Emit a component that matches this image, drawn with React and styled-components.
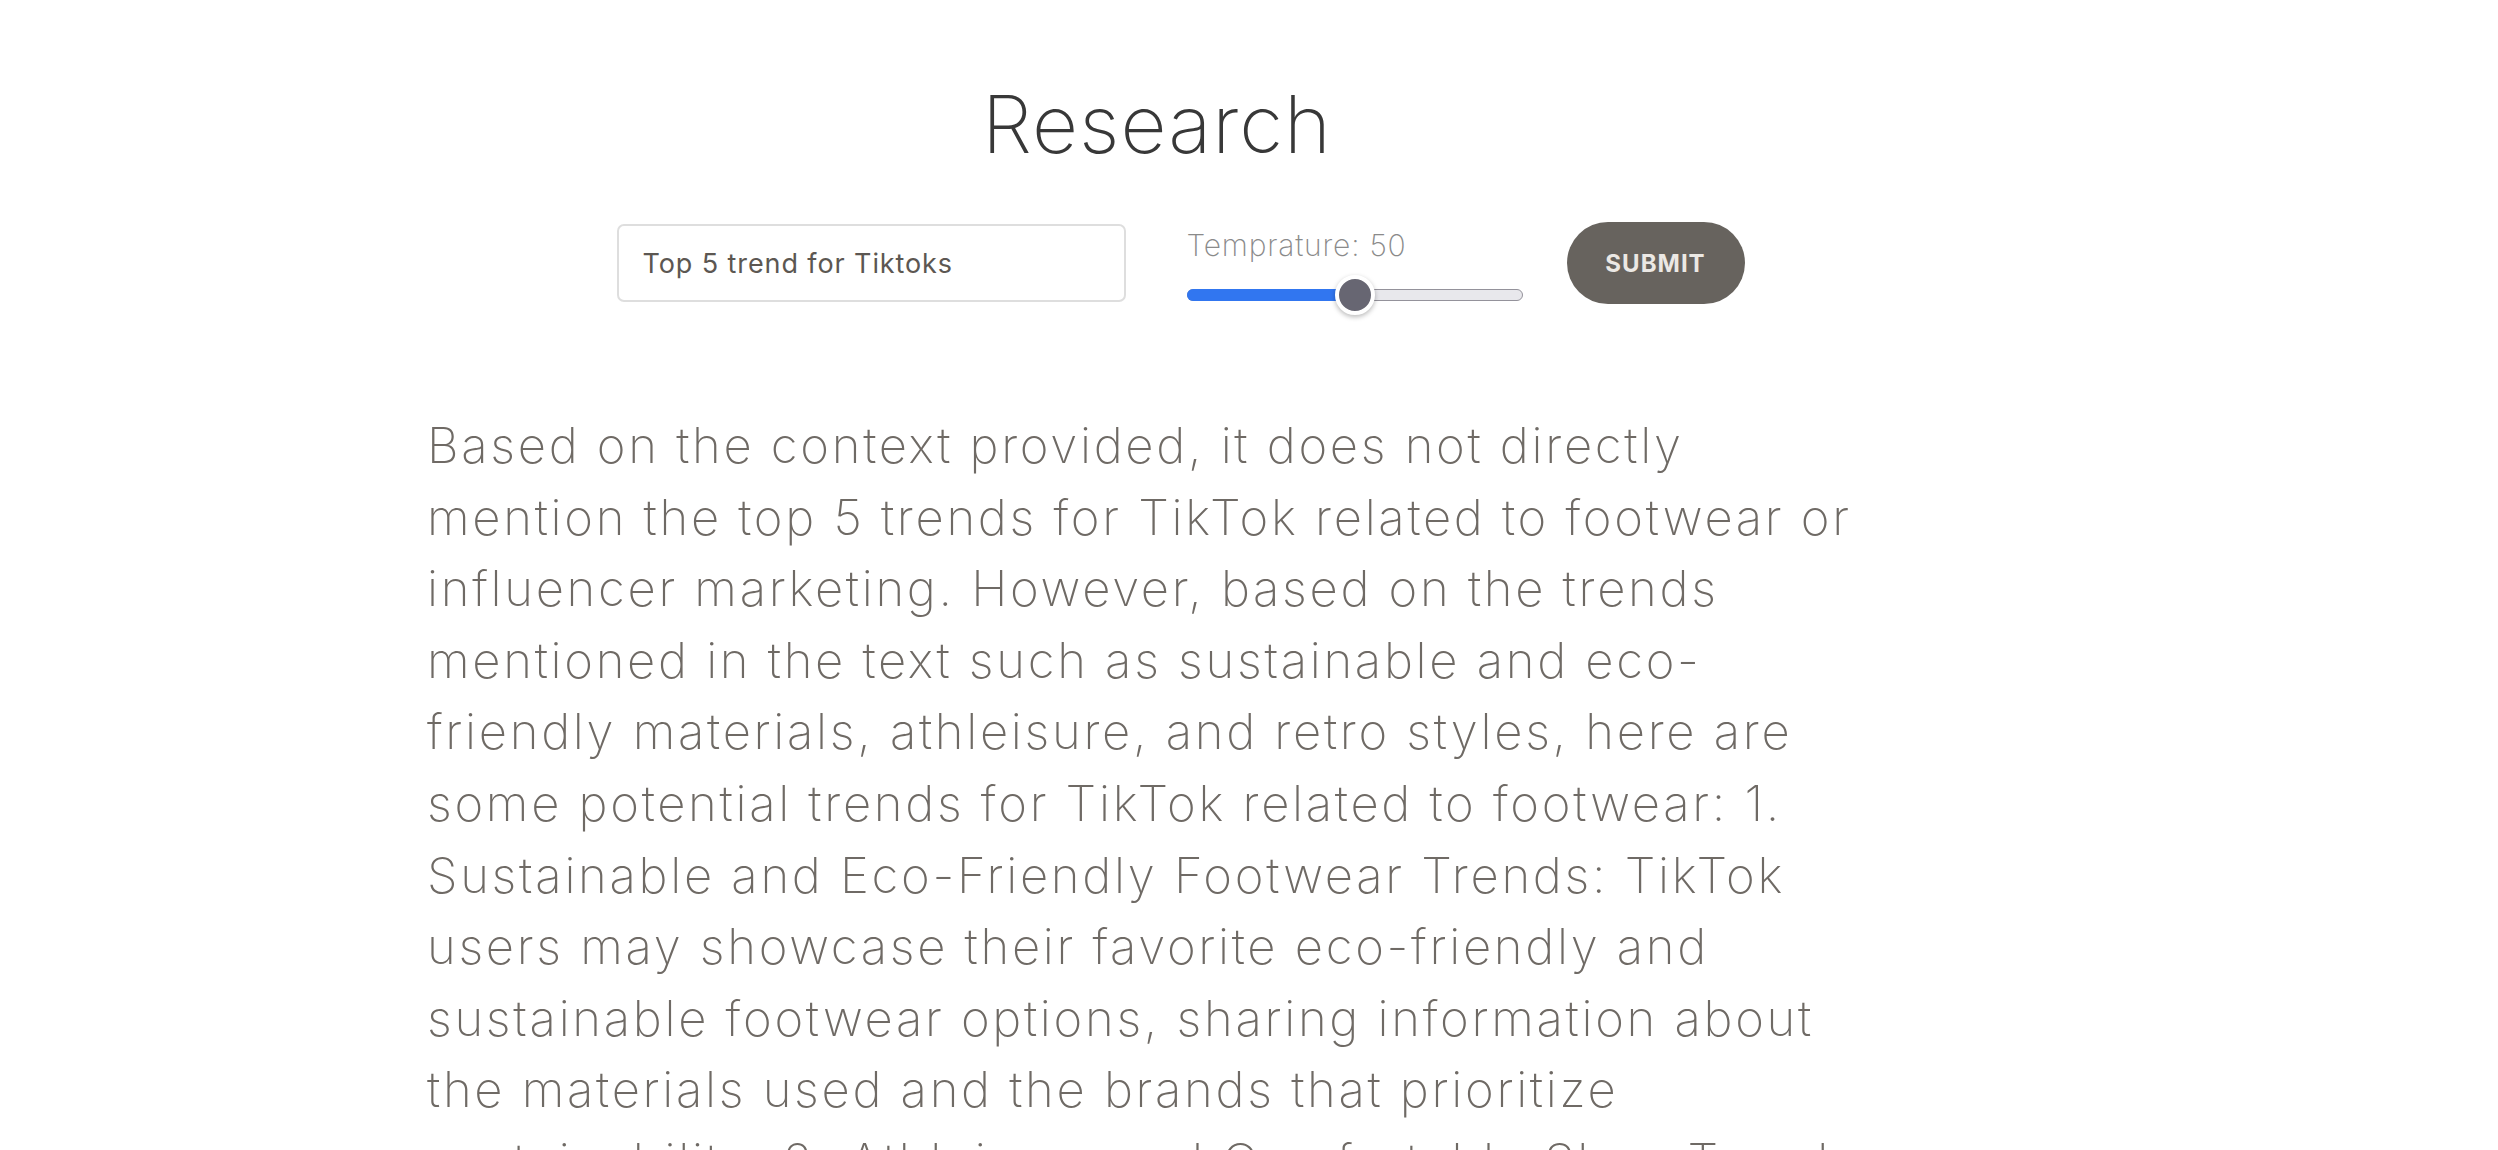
import React from "react";
import styled, { createGlobalStyle } from "styled-components";

const Global = createGlobalStyle`
  html, body { margin: 0; padding: 0; background: #ffffff; }
  body { font-family: Inter, "Open Sans", "Liberation Sans", sans-serif; }
  * { box-sizing: border-box; }
`;

const Page = styled.main`
  padding: 84px 0 80px 427px;
`;

const Column = styled.div`
  width: 1460px;
  display: flex;
  flex-direction: column;
`;

const Title = styled.h1`
  margin: 0;
  text-align: center;
  font-family: Inter, "Open Sans", sans-serif;
  font-weight: 200;
  font-size: 80px;
  line-height: 80px;
  letter-spacing: 1px;
  color: #383838;
`;

const Controls = styled.form`
  margin-top: 58px;
  display: flex;
  align-items: center;
  justify-content: center;
  padding-left: 47px;
  height: 82px;
`;

const TextInput = styled.input`
  width: 509px;
  height: 78px;
  border: 2px solid #dedede;
  border-radius: 7px;
  padding: 0 24px;
  font-family: Inter, "Open Sans", sans-serif;
  font-size: 27px;
  font-weight: 400;
  letter-spacing: 0.9px;
  color: #5c5752;
  outline: none;
  background: #fff;
`;

const SliderGroup = styled.div`
  margin-left: 61px;
  width: 336px;
  display: flex;
  flex-direction: column;
  gap: 28px;
  padding-top: 4px;
`;

const SliderLabel = styled.label`
  font-family: Inter, "Open Sans", sans-serif;
  font-weight: 200;
  font-size: 30px;
  line-height: 32px;
  letter-spacing: 0.8px;
  color: #8a8a8a;
`;

const Track = styled.div`
  position: relative;
  height: 12px;
  border: 1px solid #94929b;
  border-radius: 6px;
  background: #e8e8ec;
`;

const Fill = styled.div`
  position: absolute;
  left: -1px;
  top: -1px;
  bottom: -1px;
  background: #3176f0;
  border-radius: 6px 0 0 6px;
`;

const Thumb = styled.div`
  position: absolute;
  top: 50%;
  width: 40px;
  height: 40px;
  margin-left: -20px;
  margin-top: -20px;
  border-radius: 50%;
  background: #676672;
  border: 4px solid #ffffff;
  box-shadow: 0 2px 5px rgba(0, 0, 0, 0.28);
`;

const SubmitButton = styled.button`
  margin-left: 44px;
  width: 178px;
  height: 82px;
  border: none;
  border-radius: 41px;
  background: #67635e;
  color: #ebe8e4;
  font-family: Inter, "Open Sans", sans-serif;
  font-weight: 700;
  font-size: 24px;
  letter-spacing: 1px;
  cursor: pointer;
`;

const Answer = styled.p`
  margin: 106px 0 0;
  font-family: Inter, "Open Sans", sans-serif;
  font-weight: 200;
  font-size: 49px;
  line-height: 71.6px;
  letter-spacing: 2.7px;
  color: #6f6a65;
`;

const answerText =
  "Based on the context provided, it does not directly mention the top 5 trends for TikTok related to footwear or influencer marketing. However, based on the trends mentioned in the text such as sustainable and eco-friendly materials, athleisure, and retro styles, here are some potential trends for TikTok related to footwear: 1. Sustainable and Eco-Friendly Footwear Trends: TikTok users may showcase their favorite eco-friendly and sustainable footwear options, sharing information about the materials used and the brands that prioritize sustainability. 2. Athleisure and Comfortable Shoe Trends: TikTok users may share videos styling comfortable sneakers and athleisure footwear for everyday wear. 3. Retro and Vintage Sneaker Trends: users may showcase throwback designs and classic silhouettes.";

function Slider({ value }) {
  return (
    <SliderGroup>
      <SliderLabel>Temprature: {value}</SliderLabel>
      <Track>
        <Fill style={{ width: `${value}%` }} />
        <Thumb style={{ left: `${value}%` }} />
      </Track>
    </SliderGroup>
  );
}

export default function App() {
  return (
    <>
      <Global />
      <Page>
        <Column>
          <Title>Research</Title>
          <Controls onSubmit={(e) => e.preventDefault()}>
            <TextInput defaultValue="Top 5 trend for Tiktoks" />
            <Slider value={50} />
            <SubmitButton type="submit">SUBMIT</SubmitButton>
          </Controls>
          <Answer>{answerText}</Answer>
        </Column>
      </Page>
    </>
  );
}
